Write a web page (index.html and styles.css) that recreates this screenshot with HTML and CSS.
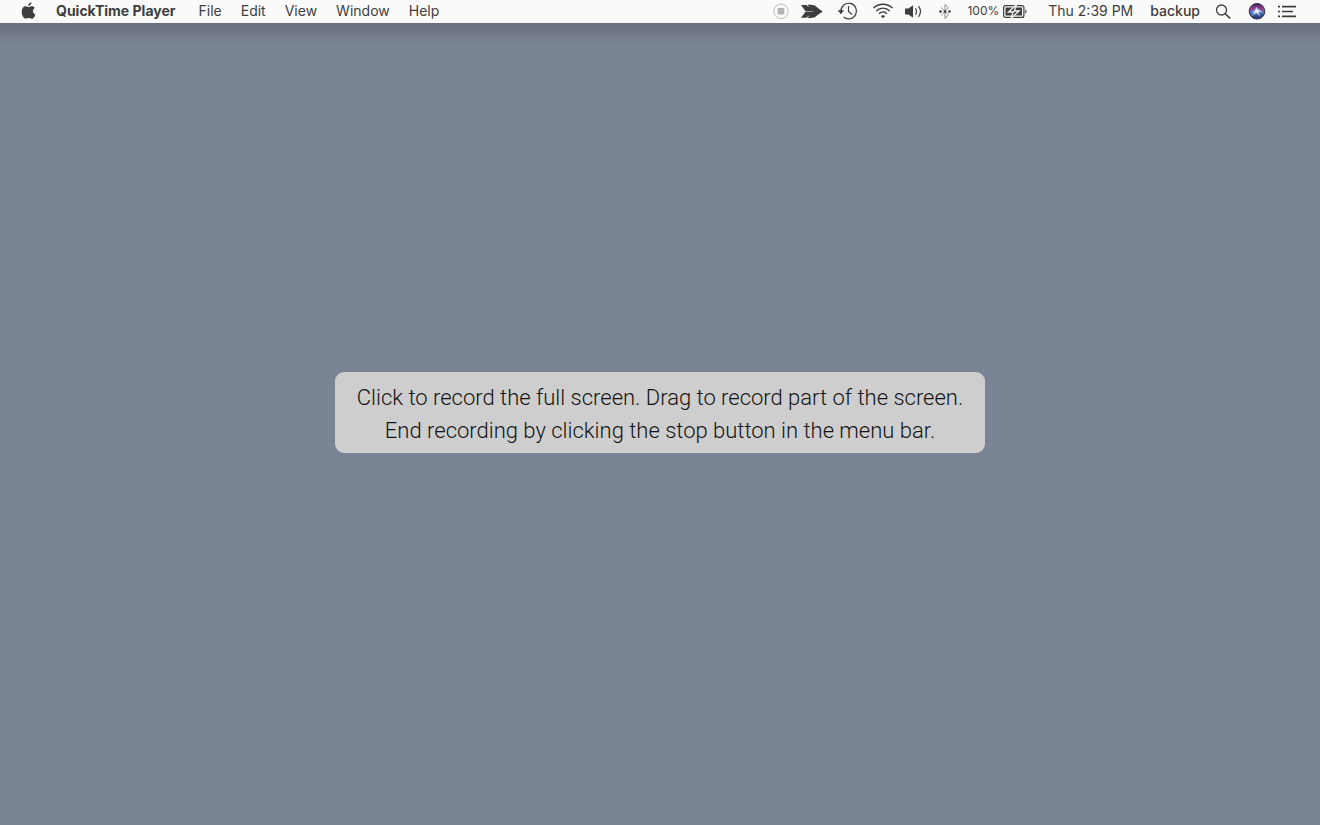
FILE: index.html
```html
<!DOCTYPE html>
<html lang="en">
<head>
<meta charset="utf-8">
<title>QuickTime Player</title>
<link rel="stylesheet" href="styles.css">
</head>
<body>
<header class="menubar">
  <nav class="menus" aria-label="Application menus">
    <button class="item apple" aria-label="Apple menu">
      <svg width="15" height="18" viewBox="0 0 15 18"><path fill="currentColor" d="M10.400 0.200c.1 1.900-1.300 3.700-3.100 3.700C7.200 2.200 8.600.500 10.400.200zM7.500 5.100c.8 0 1.700-.9 3.200-.9 1.300 0 2.500.7 3.100 1.700-2.700 1.700-2.300 5.300.6 6.500-.6 1.900-2 4.300-3.500 4.300-1.200 0-1.700-.7-3.100-.7s-2 .7-3.100.7C2.800 16.700.7 13.300.7 9.800c0-3.500 2-5.500 4.200-5.500 1.200 0 2 .8 2.600.8z"/></svg>
    </button>
    <button class="item app-name">QuickTime Player</button>
    <button class="item">File</button>
    <button class="item">Edit</button>
    <button class="item">View</button>
    <button class="item">Window</button>
    <button class="item">Help</button>
  </nav>
  <div class="status">
    <button class="item" aria-label="Stop recording">
      <svg width="16" height="22" viewBox="0 0 16 22"><circle cx="8" cy="11.300" r="7.200" fill="none" stroke="#bcbcbc"/><rect x="4.700" y="8" width="6.600" height="6.600" rx=".8" fill="#b4b4b4"/></svg>
    </button>
    <button class="item" aria-label="Arrow">
      <svg width="23" height="22" viewBox="0 0 23 22"><path fill="currentColor" d="M0 5h5.500L8 7.200 6.800 4.500l6.700.8 7.500 6H4.500zM4.500 11.700H21l-7.500 5.700-6.700.8L8 15.500l-2.500 2.300H0z"/><path fill="currentColor" d="M12 10.500h9v2h-9z"/></svg>
    </button>
    <button class="item" aria-label="Time Machine">
      <svg width="23" height="22" viewBox="0 0 23 22"><path d="M4.900 11.500A7.800 7.800 0 1 1 7.600 17M12.500 6v5.500l3.500 3" fill="none" stroke="currentColor" stroke-width="1.200"/><path d="M1.600 10.300h6.600l-3.300 4z" fill="currentColor"/></svg>
    </button>
    <button class="item" aria-label="Wi-Fi">
      <svg width="22" height="22" viewBox="0 0 22 22"><g fill="none" stroke="currentColor" stroke-width="1.400"><path d="M2.500 8.100c5.300-5.200 13.700-5.200 19 0M5.200 10.900c3.800-3.700 9.800-3.700 13.600 0M8 13.700c2.300-2.200 5.700-2.200 8 0"/></g><path d="M12 18.300l-2.200-2.200q2.200-1.800 4.400 0z" fill="currentColor"/></svg>
    </button>
    <button class="item" aria-label="Volume">
      <svg width="18" height="22" viewBox="0 0 18 22"><path d="M0 8.500h3.500L8 5.300v12.400l-4.500-3.200H0z" fill="currentColor"/><path d="M10.500 8.300q2 3.200 0 6.400M13.500 6.200q4 5.300 0 10.600" fill="none" stroke="currentColor" stroke-width="1.200"/></svg>
    </button>
    <button class="item" aria-label="Bluetooth">
      <svg width="20" height="22" viewBox="0 0 20 22"><path d="M6 7.500l7.500 7.200L10 18.500V4.500l3.500 3.300L6 15.500" fill="none" stroke="#8c8c8c"/><g fill="currentColor"><circle cx="5.500" cy="11.600" r="1.300"/><circle cx="10" cy="11.600" r="1.300"/><circle cx="14.500" cy="11.600" r="1.300"/></g></svg>
    </button>
    <button class="item battery">100%
      <svg width="25" height="22" viewBox="0 0 25 22"><rect x=".6" y="5.600" width="20.300" height="11.800" rx="2" fill="none" stroke="currentColor" stroke-width="1.200"/><path d="M22.300 9.200q2.500 2.300 0 4.600z" fill="currentColor"/><path d="M2.500 7.500h16.500v8H2.500z" fill="currentColor"/><path d="M13.500 4.500L5.500 12h4.700L8 18.500l8-7.500h-4.700z" fill="currentColor" stroke="#fafafa" stroke-width="1.300"/></svg>
    </button>
    <button class="item clock">Thu 2:39 PM</button>
    <button class="item user">backup</button>
    <button class="item" aria-label="Spotlight">
      <svg width="22" height="22" viewBox="0 0 22 22"><circle cx="9.500" cy="10" r="5" fill="none" stroke="currentColor" stroke-width="1.300"/><path d="M13.200 13.700l5 4.800" stroke="currentColor" stroke-width="1.600"/></svg>
    </button>
    <button class="item" aria-label="Siri">
      <svg width="20" height="22" viewBox="0 0 20 22"><defs><linearGradient id="orb" x1="0" y1="0" x2="0" y2="1"><stop offset="0" stop-color="#30245c"/><stop offset=".35" stop-color="#a33c91"/><stop offset=".55" stop-color="#4b79bf"/><stop offset="1" stop-color="#202866"/></linearGradient><radialGradient id="glow"><stop offset="0" stop-color="#fff"/><stop offset="1" stop-color="#9ed8f5" stop-opacity="0"/></radialGradient></defs><circle cx="11" cy="11.300" r="7.800" fill="url(#orb)" stroke="#343345"/><circle cx="11" cy="11" r="4" fill="url(#glow)"/><path d="M10.500 6.500l1 3.500q3 0 5.500 2.500l-4.500-1 1.500 5.500-3-4.500-5.500 3.500 3-4-3.500.5 4.500-2z" fill="#e7f2ff" opacity=".8"/></svg>
    </button>
    <button class="item" aria-label="Notification Center">
      <svg width="18" height="22" viewBox="0 0 18 22"><path d="M0 6.700h2M4 6.700h14M0 11.500h2M4 11.500h11M0 16.300h2M4 16.300h14" stroke="currentColor" stroke-width="1.700"/></svg>
    </button>
  </div>
</header>
<main class="desktop">
  <p class="hint">Click to record the full screen. Drag to record part of the screen.<br>End recording by clicking the stop button in the menu bar.</p>
</main>
</body>
</html>
```
FILE: styles.css
```css
* { box-sizing: border-box; }
body {
  margin: 0;
  min-height: 100vh;
  display: flex;
  flex-direction: column;
  background: #7b8495;
  font-family: Inter, "Liberation Sans", sans-serif;
}
.menubar {
  display: flex;
  justify-content: space-between;
  align-items: center;
  height: 23px;
  padding: 0 24px 1px 21px;
  background: #fafafa;
  color: #3e3e3e;
}
.menus, .status { display: flex; align-items: center; }
.menus { gap: 19px; }
.status { gap: 12px; }
.item {
  display: flex;
  align-items: center;
  margin: 0;
  padding: 0;
  border: 0;
  background: none;
  color: inherit;
  font: inherit;
  font-size: 14px;
  line-height: 22px;
  white-space: nowrap;
}
.item svg { display: block; }
.app-name { padding: 0 4px 0 1px; font-weight: 700; }
.battery { gap: 4px; font-size: 12px; }
.clock { padding: 0 5px 0 8px; }
.user { font-weight: 500; }
.desktop {
  flex: 1;
  display: flex;
  align-items: center;
  justify-content: center;
  padding-bottom: 23px;
  background: linear-gradient(#68707f, #7b8495 22px);
}
.hint {
  margin: 0;
  padding: 9px 22px 6px;
  border-radius: 9px;
  background: #cecece;
  color: #141414;
  font-family: Roboto, "Liberation Sans", sans-serif;
  font-size: 22px;
  font-weight: 300;
  line-height: 33px;
  text-align: center;
}
```
